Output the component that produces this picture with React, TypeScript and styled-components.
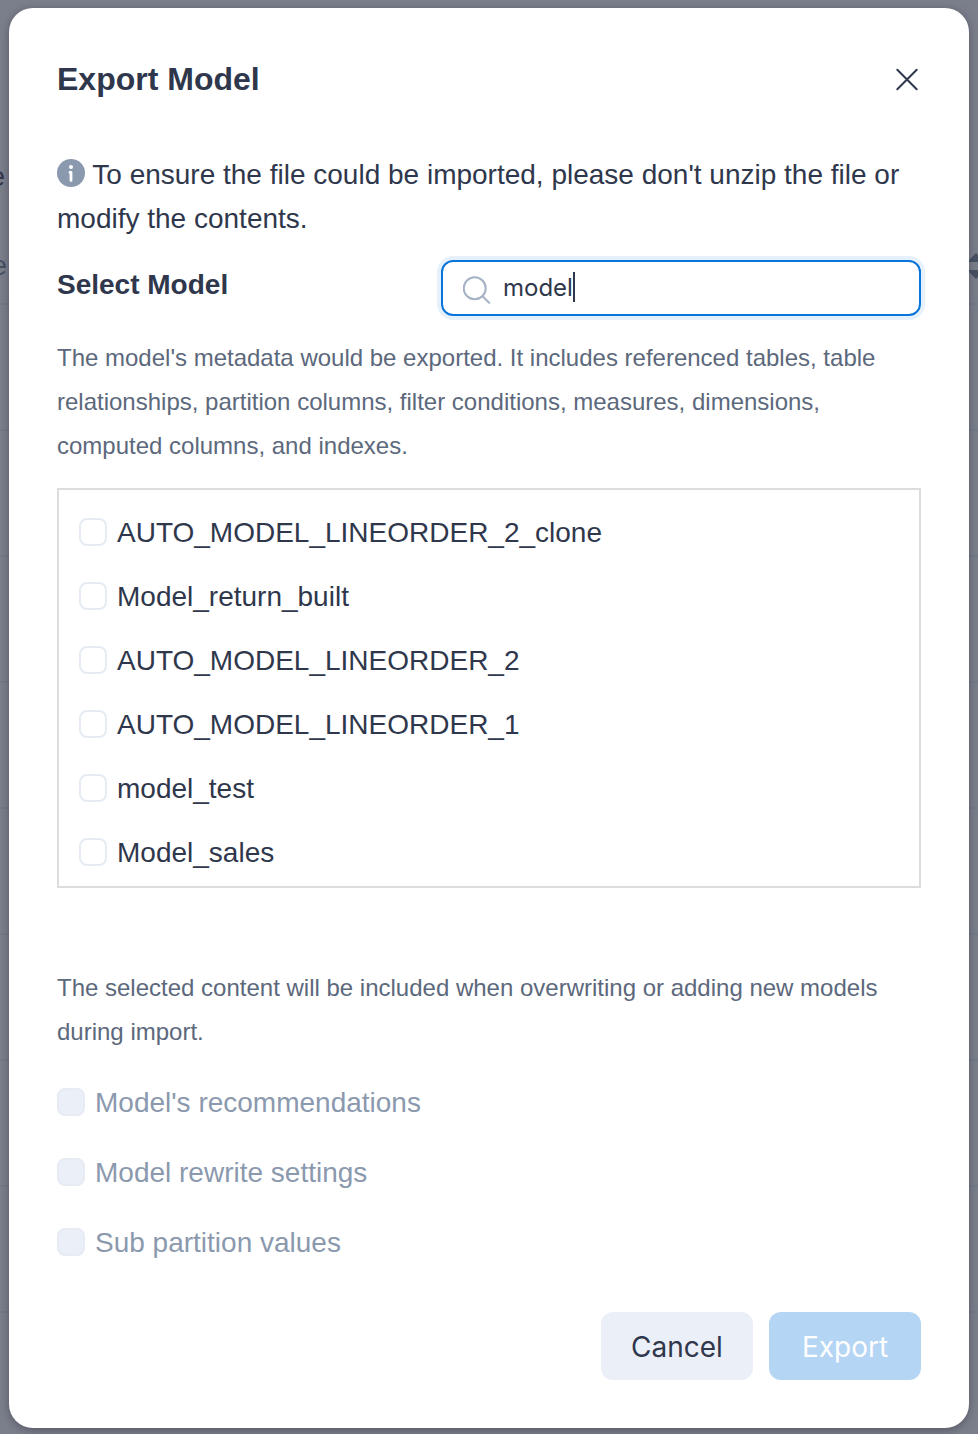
import React, { useState } from 'react';
import styled, { createGlobalStyle, css } from 'styled-components';

const color = {
  ink: '#2f374c',
  body: '#5c687c',
  muted: '#8b99ae',
  line: '#dddddd',
  boxLine: '#e6ebf4',
  soft: '#ebeff8',
  primary: '#0875da',
  primaryHalo: '#e6f1fb',
  primaryOff: '#b4d5f4',
  page: '#7b7f8b',
  pageLine: '#727a89',
};

const uiFont = "Inter, 'Liberation Sans', sans-serif";

const GlobalStyle = createGlobalStyle`
  *, *::before, *::after { box-sizing: border-box; }
  body {
    margin: 0;
    background: ${color.page};
    color: ${color.ink};
    font-family: 'Liberation Sans', Arial, sans-serif;
    font-size: 28px;
    line-height: 44px;
  }
`;

const Page = styled.div`
  position: relative;
  min-height: 100vh;
  padding: 8px 9px 6px;
  overflow: hidden;
`;

const Backdrop = styled.div`
  position: absolute;
  inset: 0;
  overflow: hidden;
`;

const BackdropRow = styled.div<{ $height: number; $line?: boolean; $edge: number }>`
  display: flex;
  align-items: flex-end;
  justify-content: space-between;
  height: ${(p) => p.$height}px;
  padding-bottom: 15px;
  border-bottom: 2px solid ${(p) => (p.$line ? color.pageLine : 'transparent')};

  > span {
    display: flex;
    justify-content: flex-end;
    width: ${(p) => p.$edge}px;
    overflow: hidden;
    color: ${(p) => (p.$line ? '#475164' : '#32394d')};
  }

  > svg {
    flex: none;
    margin-bottom: 8px;
  }
`;

const Dialog = styled.section`
  position: relative;
  padding: 48px;
  border-radius: 24px;
  background: #fff;
  box-shadow: 0 2px 8px rgba(47, 47, 60, 0.5);
`;

const Header = styled.header`
  display: flex;
  align-items: center;
  justify-content: space-between;
  margin-bottom: 51px;
`;

const Title = styled.h1`
  margin: 0;
  font-size: 32px;
  line-height: 46px;
`;

const CloseButton = styled.button`
  display: flex;
  padding: 0;
  border: 0;
  background: none;
  color: ${color.ink};
  cursor: pointer;
`;

const Notice = styled.p`
  margin: 0 0 19px;

  svg {
    vertical-align: -3px;
  }
`;

const SelectRow = styled.div`
  display: flex;
  align-items: flex-start;
  justify-content: space-between;
  margin-bottom: 20px;
`;

const SectionTitle = styled.h2`
  margin: 0;
  font-size: 28px;
  line-height: 50px;
`;

const SearchField = styled.label`
  position: relative;
  display: flex;
  align-items: center;
  gap: 12px;
  width: 480px;
  height: 56px;
  padding: 0 18px 0 20px;
  border: 2px solid ${color.primary};
  border-radius: 12px;
  box-shadow: 0 0 0 4px ${color.primaryHalo};

  svg {
    flex: none;
    margin-top: 4px;
  }
`;

const SearchInput = styled.input`
  flex: 1;
  min-width: 0;
  padding: 0;
  border: 0;
  outline: 0;
  background: none;
  color: ${color.ink};
  font: 24px/32px ${uiFont};
`;

const Caret = styled.i`
  position: absolute;
  top: 10px;
  left: 130px;
  width: 2px;
  height: 30px;
  background: ${color.ink};
`;

const Description = styled.p`
  margin: 0 0 20px;
  color: ${color.body};
  font-size: 24px;
`;

const ModelList = styled.ul`
  height: 400px;
  margin: 0 0 78px;
  padding: 10px 20px 0;
  border: 2px solid ${color.line};
  overflow: auto;
  list-style: none;
`;

const ModelItem = styled.li`
  padding: 10px 0 8px;
`;

const CheckLabel = styled.label<{ $disabled?: boolean }>`
  display: flex;
  align-items: flex-start;
  gap: 10px;
  line-height: 46px;
  cursor: pointer;
  ${(p) =>
    p.$disabled &&
    css`
      color: ${color.muted};
      cursor: not-allowed;
    `}
`;

const CheckBox = styled.input`
  appearance: none;
  flex: none;
  width: 28px;
  height: 28px;
  margin: 8px 0 0;
  border: 2px solid ${color.boxLine};
  border-radius: 8px;
  background: #fff;

  &:checked {
    border-color: ${color.primary};
    background: ${color.primary};
  }
  &:disabled {
    background: ${color.soft};
  }
`;

const Options = styled.div`
  display: flex;
  flex-direction: column;
  gap: 24px;
  padding-top: 6px;
`;

const Footer = styled.footer`
  display: flex;
  justify-content: flex-end;
  gap: 16px;
  margin-top: 46px;
`;

const Button = styled.button<{ $primary?: boolean }>`
  width: 152px;
  height: 68px;
  padding: 2px 0 0;
  border: 0;
  border-radius: 12px;
  background: ${(p) => (p.$primary ? color.primaryOff : color.soft)};
  color: ${(p) => (p.$primary ? '#fff' : color.ink)};
  font: 28px/44px ${uiFont};
`;

const models = [
  'AUTO_MODEL_LINEORDER_2_clone',
  'Model_return_built',
  'AUTO_MODEL_LINEORDER_2',
  'AUTO_MODEL_LINEORDER_1',
  'model_test',
  'Model_sales',
];

const options = ["Model's recommendations", 'Model rewrite settings', 'Sub partition values'];

const tableRows = [126, 126, 126, 126, 126, 126, 126, 126];

function CloseIcon() {
  return (
    <svg width="28" height="28" viewBox="0 0 28 28" fill="none" stroke="currentColor" strokeWidth="2" strokeLinecap="round" aria-hidden="true">
      <path d="M4.3 4.8 23.7 24.2M23.7 4.8 4.3 24.2" />
    </svg>
  );
}

function InfoIcon() {
  return (
    <svg width="28" height="28" viewBox="0 0 28 28" aria-hidden="true">
      <circle cx="14" cy="14" r="14" fill={color.muted} />
      <circle cx="14" cy="8" r="2" fill="#fff" />
      <path d="M13 13.4h1v8" fill="none" stroke="#fff" strokeWidth="2.8" strokeLinecap="round" strokeLinejoin="round" />
    </svg>
  );
}

function SearchIcon() {
  return (
    <svg width="28" height="28" viewBox="0 0 28 28" fill="none" stroke="#a5b2c5" strokeWidth="2" aria-hidden="true">
      <circle cx="11.7" cy="12.3" r="11" />
      <path d="m19.6 20.2 7.2 7.2" />
    </svg>
  );
}

function SortIcon() {
  return (
    <svg width="9" height="28" viewBox="0 0 9 28" fill="#475164" aria-hidden="true">
      <path d="M0 8 7 1l2 2v7H0ZM0 18h9v7l-2 2-7-7Z" />
    </svg>
  );
}

export default function App() {
  const [keyword, setKeyword] = useState('model');
  const [edited, setEdited] = useState(false);

  return (
    <Page>
      <GlobalStyle />
      <Backdrop aria-hidden="true">
        <BackdropRow $height={216} $edge={5}>
          <span>e</span>
        </BackdropRow>
        <BackdropRow $height={89} $edge={7} $line>
          <span>e</span>
          <SortIcon />
        </BackdropRow>
        {tableRows.map((height, i) => (
          <BackdropRow key={i} $height={height} $edge={0} $line />
        ))}
      </Backdrop>

      <Dialog role="dialog" aria-labelledby="export-title">
        <Header>
          <Title id="export-title">Export Model</Title>
          <CloseButton type="button" aria-label="Close">
            <CloseIcon />
          </CloseButton>
        </Header>

        <Notice>
          <InfoIcon /> To ensure the file could be imported, please don't unzip the file or modify the contents.
        </Notice>

        <SelectRow>
          <SectionTitle>Select Model</SectionTitle>
          <SearchField>
            <SearchIcon />
            <SearchInput
              type="text"
              aria-label="Search model"
              value={keyword}
              onChange={(e) => {
                setKeyword(e.target.value);
                setEdited(true);
              }}
            />
            {!edited && <Caret />}
          </SearchField>
        </SelectRow>

        <Description>
          The model's metadata would be exported. It includes referenced tables, table relationships, partition
          columns, filter conditions, measures, dimensions, computed columns, and indexes.
        </Description>

        <ModelList>
          {models.map((name) => (
            <ModelItem key={name}>
              <CheckLabel>
                <CheckBox type="checkbox" />
                {name}
              </CheckLabel>
            </ModelItem>
          ))}
        </ModelList>

        <Description>
          The selected content will be included when overwriting or adding new models during import.
        </Description>

        <Options>
          {options.map((name) => (
            <CheckLabel key={name} $disabled>
              <CheckBox type="checkbox" disabled />
              {name}
            </CheckLabel>
          ))}
        </Options>

        <Footer>
          <Button type="button">Cancel</Button>
          <Button type="button" $primary disabled>
            Export
          </Button>
        </Footer>
      </Dialog>
    </Page>
  );
}
